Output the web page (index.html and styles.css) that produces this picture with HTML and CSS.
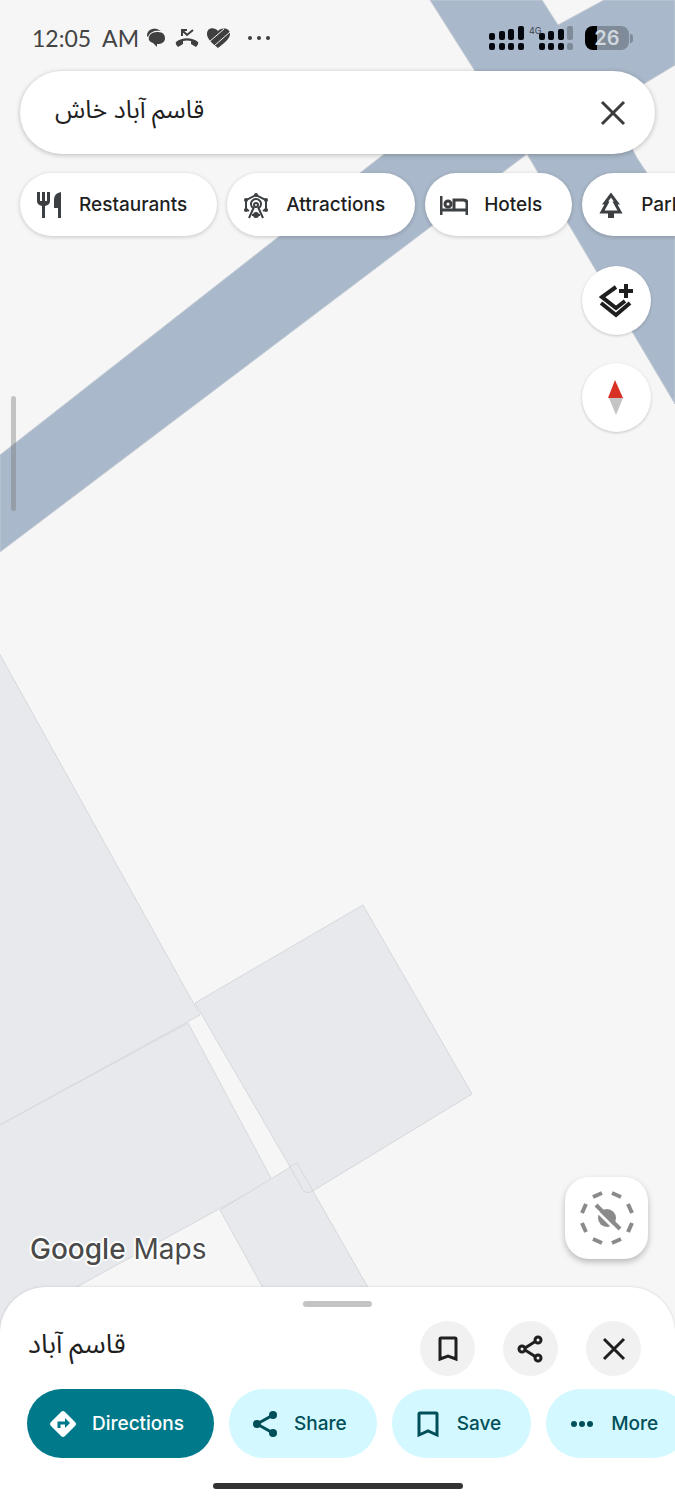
FILE: index.html
```
<!DOCTYPE html>
<html lang="en">
<head>
    <meta charset="utf-8">
    <meta name="viewport" content="width=device-width, initial-scale=1">
    <title>Google Maps</title>
    <link rel="stylesheet" href="styles.css">
</head>
<body>
<div class="screen">
    <svg class="map" viewBox="0 0 675 1500" preserveAspectRatio="xMidYMin slice" aria-hidden="true">
        <!-- roads -->
        <path class="road" d="M430 0L480 79L0 455V552L527 154L675 404V215L637 158L609 105L675 65V0H604L558 25L542 0Z"/>
        <!-- buildings -->
        <g class="building">
            <path d="M-2 651L200 1015L-2 1126Z"/>
            <path d="M-2 1126L188 1023L272 1180L-2 1330Z"/>
            <path d="M220 1210L297 1163L390 1326H284Z"/>
            <path d="M195 1003L363 905L472 1094L311 1192Q306 1194 303 1190L289 1165Z"/>
            <path class="outline" d="M289 1167L297 1163L313 1191"/>
        </g>
    </svg>

    <header class="status">
        <span class="clock">12:05&nbsp; AM</span>
        <svg class="status-icons" width="126" height="24" viewBox="0 0 126 24" aria-hidden="true">
            <path d="M2 10C2 4 7 2 12 3L16 5C11 4 5 5 3 11Z"/>
            <path d="M4 11C5 7 9 6 13 6C18 6 20 9 20 12C20 16 17 18 12 18V21L8 17C5 16 3 14 4 11Z"/>
            <path d="M31 16C37 11 47 11 53 16Q54 18 51 21L46 18V15Q42 14 38 15V18L33 21Q30 18 31 16Z"/>
            <path class="line" d="M37 10V4H42M37 4L42 9L48 4"/>
            <path d="M73 22C67 17 62 13 62 8C62 1 70 1 73 5C77 1 85 2 85 8C85 13 79 17 73 22Z"/>
            <path class="cut" d="M64 16L79 3M69 20L85 6"/>
            <circle cx="105" cy="12" r="2"/><circle cx="114" cy="12" r="2"/><circle cx="123" cy="12" r="2"/>
        </svg>
        <svg class="signal" width="84" height="26" viewBox="0 0 84 26" aria-hidden="true">
            <g>
                <rect x="0" y="8" width="6" height="7" rx="2"/><rect x="10" y="6" width="6" height="9" rx="2"/><rect x="19" y="4" width="6" height="11" rx="2"/><rect x="29" y="1" width="6" height="14" rx="2"/>
                <rect x="0" y="18" width="6" height="7" rx="2"/><rect x="10" y="18" width="6" height="7" rx="2"/><rect x="19" y="18" width="6" height="7" rx="2"/><rect x="29" y="18" width="6" height="7" rx="2"/>
                <rect x="50" y="8" width="6" height="7" rx="2"/><rect x="59" y="6" width="6" height="9" rx="2"/><rect x="69" y="4" width="6" height="11" rx="2"/>
                <rect x="50" y="18" width="6" height="7" rx="2"/><rect x="59" y="18" width="6" height="7" rx="2"/><rect x="69" y="18" width="6" height="7" rx="2"/>
            </g>
            <g class="off"><rect x="78" y="1" width="6" height="14" rx="2"/><rect x="78" y="18" width="6" height="7" rx="2"/></g>
            <text x="40" y="9">4G</text>
        </svg>
        <span class="battery">26</span>
    </header>

    <form class="search" role="search">
        <input class="search-input" type="text" dir="rtl" value="قاسم آباد خاش" aria-label="Search here">
        <button class="search-clear" type="button" aria-label="Clear">
            <svg width="28" height="28" viewBox="0 0 28 28"><path d="M3 3L25 25M25 3L3 25"/></svg>
        </button>
    </form>

    <nav class="chips" aria-label="Categories">
        <button class="chip" type="button">
            <svg width="28" height="28" viewBox="0 0 28 28"><path class="fill" d="M2 1H5V10H7V1H10V10H12V1H15V10Q15 14 10 15V27H7V15Q2 14 2 10ZM26 1V27H23V17H19V9Q19 2 26 1Z"/></svg>
            Restaurants
        </button>
        <button class="chip" type="button">
            <svg width="28" height="28" viewBox="0 0 28 28"><path class="stroke thin" d="M7 20L4 18V9L14 4L24 9V18L21 20M11 17A5 5 0 1 1 17 17M7 27L12 16M21 27L16 16M10 24H18"/><circle class="stroke thin" cx="14" cy="14" r="2"/><g class="fill"><circle cx="14" cy="4" r="2"/><circle cx="24" cy="9" r="2"/><circle cx="4" cy="9" r="2"/><circle cx="4" cy="19" r="2"/><circle cx="24" cy="19" r="2"/><circle cx="14" cy="24" r="3"/></g></svg>
            Attractions
        </button>
        <button class="chip" type="button">
            <svg width="28" height="28" viewBox="0 0 28 28"><path class="stroke" d="M1 5V24M1 19H27M27 24V12Q27 9 23 9H14V19"/><circle class="stroke" cx="8" cy="13" r="3"/></svg>
            Hotels
        </button>
        <button class="chip" type="button">
            <svg width="28" height="28" viewBox="0 0 28 28"><path class="stroke" d="M14 4L8 12H10L5 21H23L18 12H20Z"/><path class="fill" d="M11 21H17V27H11Z"/></svg>
            Parks
        </button>
    </nav>

    <div class="map-tools">
        <button class="round" type="button" aria-label="Layers">
            <svg width="36" height="36" viewBox="0 0 36 36"><path class="layers" d="M17 4L3 14L17 25L26 18M2 20L17 32L31 20M27 1V15M20 8H34"/></svg>
        </button>
        <button class="round" type="button" aria-label="Compass">
            <svg width="18" height="36" viewBox="0 0 18 36"><path fill="#d93025" d="M7 0L15 18H0Z"/><path fill="#c4c4c4" d="M1 18H15L8 35Z"/></svg>
        </button>
    </div>

    <div class="scroll-thumb"></div>

    <div class="map-footer">
        <span class="logo"><span class="logo-google">Google</span> Maps</span>
        <button class="lens" type="button" aria-label="Location off">
            <svg width="56" height="56" viewBox="0 0 56 56">
                <path class="dashes" d="M33 3L42 7M49 14L53 23M53 33L49 42M42 49L33 53M23 53L14 49M7 42L3 33M3 23L7 14M14 7L23 3"/>
                <circle cx="28" cy="28" r="9"/>
                <path class="gap" d="M15 18L39 42"/>
                <path class="slash" d="M17 15L41 39"/>
            </svg>
        </button>
    </div>

    <section class="sheet">
        <div class="handle"></div>
        <div class="sheet-head">
            <h1 class="place" dir="rtl" lang="fa">قاسم آباد</h1>
            <button class="mini" type="button" aria-label="Save">
                <svg width="28" height="28" viewBox="0 0 28 28"><path d="M6 4Q6 3 7 3H21Q22 3 22 4V24L14 21L6 24Z"/></svg>
            </button>
            <button class="mini" type="button" aria-label="Share">
                <svg width="28" height="28" viewBox="0 0 28 28"><path d="M8 13L19 6M8 15L19 22"/><circle cx="5" cy="14" r="3"/><circle cx="21" cy="5" r="3"/><circle cx="21" cy="23" r="3"/></svg>
            </button>
            <button class="mini" type="button" aria-label="Close">
                <svg width="28" height="28" viewBox="0 0 28 28"><path d="M4 4L24 24M24 4L4 24"/></svg>
            </button>
        </div>
        <div class="actions">
            <button class="action primary" type="button">
                <svg width="28" height="28" viewBox="0 0 28 28"><path class="fill" d="M12 2Q14 0 16 2L26 12Q28 14 26 16L16 26Q14 28 12 26L2 16Q0 14 2 12Z"/><path class="arrow" d="M10 18V13H17"/><path fill="#00798a" d="M16 8L21 13L16 18Z"/></svg>
                Directions
            </button>
            <button class="action" type="button">
                <svg width="28" height="28" viewBox="0 0 28 28"><path class="stroke" d="M22 5L6 14L22 23"/><g class="fill"><circle cx="22" cy="5" r="4"/><circle cx="6" cy="14" r="4"/><circle cx="22" cy="23" r="4"/></g></svg>
                Share
            </button>
            <button class="action" type="button">
                <svg width="28" height="28" viewBox="0 0 28 28"><path class="stroke" d="M5 4Q5 3 6 3H22Q23 3 23 4V25L14 21L5 25Z"/></svg>
                Save
            </button>
            <button class="action" type="button">
                <svg width="28" height="28" viewBox="0 0 28 28"><g class="fill"><circle cx="6" cy="14" r="3"/><circle cx="14" cy="14" r="3"/><circle cx="22" cy="14" r="3"/></g></svg>
                More
            </button>
        </div>
        <div class="home-bar"></div>
    </section>
</div>
</body>
</html>
```
FILE: styles.css
```
* {
    box-sizing: border-box;
}
body {
    margin: 0;
    font-family: "Inter", "Noto Sans", sans-serif;
    color: #1f1f1f;
}
button {
    border: 0;
    padding: 0;
    font: inherit;
    color: inherit;
    cursor: pointer;
}
svg {
    flex: none;
    display: block;
}
.screen {
    position: relative;
    display: flex;
    flex-direction: column;
    min-height: 100vh;
    overflow: hidden;
    background: #f6f6f6;
}
.screen > * {
    position: relative;
}

/* map */
.screen > .map {
    position: absolute;
    top: 0;
    left: 0;
    width: 100%;
    height: 100%;
}
.road {
    fill: #a9b8ca;
    stroke: #c3cbd3;
}
.building {
    fill: #e7e9ec;
    stroke: #d5d8dc;
}
.outline {
    fill: none;
}

/* status bar */
.status {
    display: flex;
    align-items: center;
    height: 71px;
    padding: 4px 46px 0 32px;
}
.clock {
    font-family: "Lato", sans-serif;
    font-size: 23px;
    color: #444;
    white-space: nowrap;
}
.status-icons {
    margin-left: 6px;
    fill: #3f3f3f;
}
.status-icons .cut {
    fill: none;
    stroke: #f6f6f6;
}
.status-icons .line {
    fill: none;
    stroke: #3f3f3f;
    stroke-width: 2;
}
.signal {
    margin-left: auto;
    margin-right: 12px;
    fill: #05080f;
}
.signal .off {
    fill: #7f8b98;
}
.signal text {
    font-size: 9px;
    fill: #3c4450;
}
.battery {
    position: relative;
    width: 44px;
    height: 24px;
    border-radius: 8px;
    background: linear-gradient(90deg, #000 12px, #7f8b98 12px);
    color: #d0d7de;
    font-size: 20px;
    font-weight: 600;
    line-height: 24px;
    text-align: center;
}
.battery::after {
    content: "";
    position: absolute;
    left: 45px;
    top: 8px;
    width: 3px;
    height: 9px;
    border-radius: 0 3px 3px 0;
    background: #7f8b98;
}

/* search */
.search {
    display: flex;
    align-items: center;
    height: 83px;
    margin: 0 20px;
    padding: 0 28px 0 35px;
    border-radius: 42px;
    background: #fff;
    box-shadow: 0 1px 5px rgba(0, 0, 0, 0.25);
}
.search-input {
    flex: 1;
    min-width: 0;
    height: 60px;
    padding: 0 0 6px;
    border: 0;
    outline: 0;
    background: none;
    color: #1f1f1f;
    font-family: "Noto Sans Arabic", "Noto Sans", "DejaVu Sans", sans-serif;
    font-size: 25px;
    text-align: left;
}
.search-clear {
    background: none;
}
.search-clear svg {
    fill: none;
    stroke: #3c3c3c;
    stroke-width: 3;
}

/* category chips */
.chips {
    display: flex;
    gap: 10px;
    padding: 19px 0 0 20px;
}
.chip {
    display: flex;
    flex: none;
    align-items: center;
    gap: 16px;
    height: 63px;
    padding: 0 30px 0 15px;
    border-radius: 32px;
    background: #fff;
    box-shadow: 0 1px 4px rgba(0, 0, 0, 0.2);
    font-size: 19px;
    font-weight: 500;
}
.chip .fill {
    fill: #3c4043;
}
.chip .stroke {
    fill: none;
    stroke: #3c4043;
    stroke-width: 3;
}
.chip .thin {
    stroke-width: 2;
}

/* floating buttons */
.map-tools {
    display: flex;
    flex-direction: column;
    align-self: flex-end;
    gap: 28px;
    margin: 30px 24px 0 0;
}
.round {
    display: flex;
    align-items: center;
    justify-content: center;
    width: 69px;
    height: 69px;
    border-radius: 50%;
    background: #fff;
    box-shadow: 0 1px 3px rgba(0, 0, 0, 0.2);
}
.layers {
    fill: none;
    stroke: #1f1f1f;
    stroke-width: 4;
}
.screen > .scroll-thumb {
    position: absolute;
    left: 11px;
    top: 396px;
    width: 5px;
    height: 115px;
    border-radius: 3px;
    background: rgba(120, 120, 120, 0.4);
}
.map-footer {
    display: flex;
    align-items: flex-end;
    justify-content: space-between;
    margin-top: auto;
    padding: 0 27px 22px 30px;
}
.logo {
    color: #4a4a4a;
    font-size: 28px;
    line-height: 32px;
    text-shadow: 0 0 3px #fff, 2px 0 1px #fff, -2px 0 1px #fff, 0 2px 1px #fff, 0 -2px 1px #fff;
}
.logo-google {
    font-weight: 500;
}
.lens {
    display: flex;
    align-items: center;
    justify-content: center;
    width: 83px;
    height: 82px;
    margin-bottom: 6px;
    border-radius: 24px;
    background: #fff;
    box-shadow: 0 3px 6px rgba(0, 0, 0, 0.25);
}
.lens svg {
    fill: #8a8a8a;
}
.dashes, .slash {
    fill: none;
    stroke: #8a8a8a;
    stroke-width: 4;
}
.gap {
    stroke: #fff;
    stroke-width: 3;
}

/* bottom sheet */
.sheet {
    padding: 14px 0 11px;
    border-radius: 46px 46px 0 0;
    background: #fff;
    box-shadow: 0 0 3px rgba(0, 0, 0, 0.15);
}
.handle {
    width: 69px;
    height: 6px;
    margin: 0 auto;
    border-radius: 3px;
    background: #c4c4c4;
}
.sheet-head {
    display: flex;
    align-items: center;
    gap: 28px;
    padding: 14px 34px 0 28px;
}
.place {
    flex: 1;
    margin: 0;
    padding-bottom: 8px;
    font-family: "Noto Sans Arabic", "Noto Sans", "DejaVu Sans", sans-serif;
    font-size: 27px;
    font-weight: 400;
    line-height: 40px;
    text-align: left;
}
.mini {
    display: flex;
    align-items: center;
    justify-content: center;
    width: 55px;
    height: 55px;
    border-radius: 50%;
    background: #f1f1f1;
}
.mini svg {
    fill: none;
    stroke: #1f1f1f;
    stroke-width: 3;
}
.actions {
    display: flex;
    gap: 15px;
    padding: 13px 0 0 27px;
    overflow: hidden;
}
.action {
    display: flex;
    flex: none;
    align-items: center;
    gap: 15px;
    height: 69px;
    padding: 0 30px 0 22px;
    border-radius: 35px;
    background: #d3f8ff;
    color: #004f58;
    font-size: 19px;
    font-weight: 500;
}
.action .fill {
    fill: currentColor;
}
.action .stroke {
    fill: none;
    stroke: currentColor;
    stroke-width: 3;
}
.primary {
    background: #00798a;
    color: #fff;
}
.arrow {
    fill: none;
    stroke: #00798a;
    stroke-width: 3;
}
.home-bar {
    width: 250px;
    height: 6px;
    margin: 25px auto 0;
    border-radius: 3px;
    background: #333;
}
```
